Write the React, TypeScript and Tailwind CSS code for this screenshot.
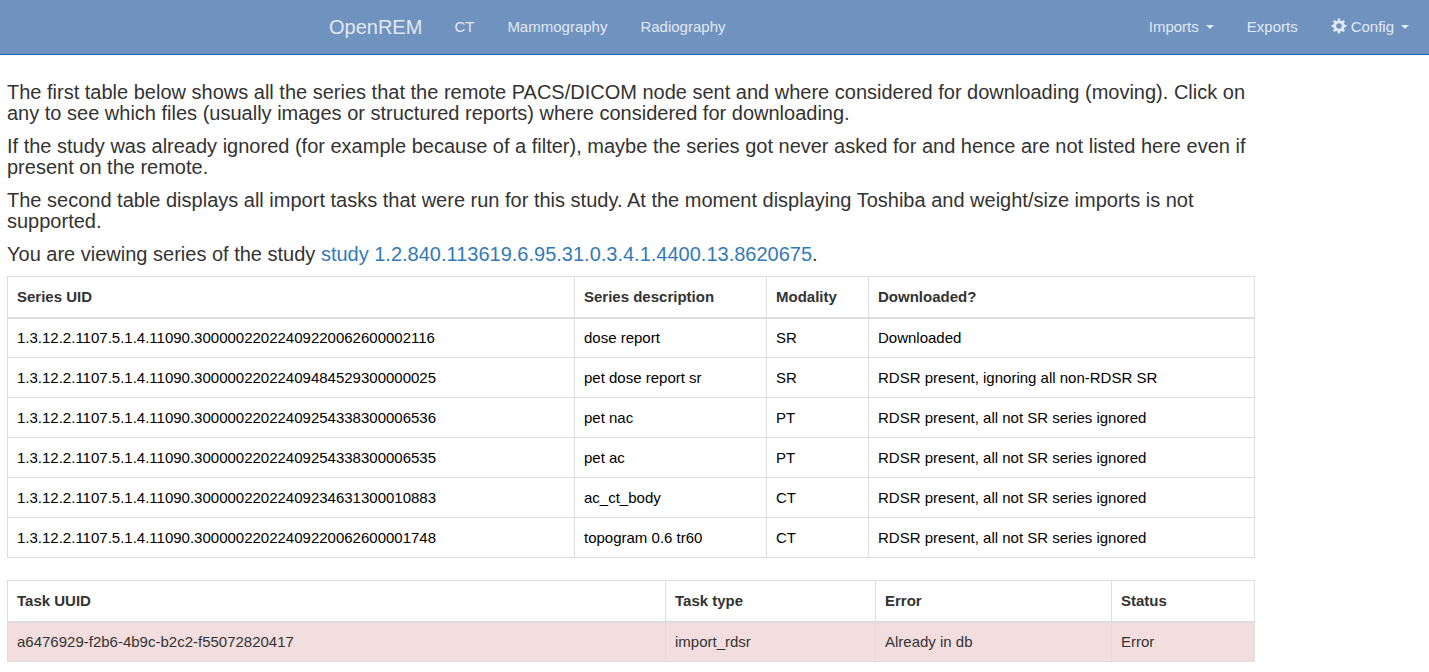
import React from "react";

const series = [
  ["1.3.12.2.1107.5.1.4.11090.30000022022409220062600002116", "dose report", "SR", "Downloaded"],
  ["1.3.12.2.1107.5.1.4.11090.30000022022409484529300000025", "pet dose report sr", "SR", "RDSR present, ignoring all non-RDSR SR"],
  ["1.3.12.2.1107.5.1.4.11090.30000022022409254338300006536", "pet nac", "PT", "RDSR present, all not SR series ignored"],
  ["1.3.12.2.1107.5.1.4.11090.30000022022409254338300006535", "pet ac", "PT", "RDSR present, all not SR series ignored"],
  ["1.3.12.2.1107.5.1.4.11090.30000022022409234631300010883", "ac_ct_body", "CT", "RDSR present, all not SR series ignored"],
  ["1.3.12.2.1107.5.1.4.11090.30000022022409220062600001748", "topogram 0.6 tr60", "CT", "RDSR present, all not SR series ignored"],
];

const tasks = [["a6476929-f2b6-4b9c-b2c2-f55072820417", "import_rdsr", "Already in db", "Error"]];

const teeth = [0, 45, 90, 135, 180, 225, 270, 315];

function Caret() {
  return <span className="ml-[7px] inline-block border-x-4 border-t-4 border-x-transparent border-t-current" />;
}

function Cog() {
  return (
    <svg viewBox="0 0 16 16" className="mr-1 mb-0.5 h-4 w-4" fill="currentColor" aria-hidden="true">
      <circle cx="8" cy="8" r="4.200" fill="none" stroke="currentColor" strokeWidth="2.800" />
      {teeth.map((angle) => (
        <path key={angle} d="M6.600 3.200 6.900 0.500h2.200l.3 2.700z" transform={`rotate(${angle} 8 8)`} />
      ))}
    </svg>
  );
}

export default function App() {
  return (
    <div className="min-h-screen bg-white font-['Liberation_Sans',Arial,sans-serif] text-[15px] leading-5 text-[#333]">
      <header className="border-b border-[#1a63bd] bg-[#7092be] text-[#e0e9f5]">
        <nav className="flex h-[54px] items-center justify-between pr-5 pl-[329px]">
          <div className="flex items-center gap-8">
            <a href="#" className="text-xl">OpenREM</a>
            <div className="flex items-center gap-[33px]">
              <a href="#">CT</a>
              <a href="#">Mammography</a>
              <a href="#">Radiography</a>
            </div>
          </div>
          <div className="flex items-center gap-[33px]">
            <button type="button" className="flex items-center">Imports<Caret /></button>
            <a href="#">Exports</a>
            <button type="button" className="flex items-center"><Cog />Config<Caret /></button>
          </div>
        </nav>
      </header>
      <main className="max-w-[1262px] px-[7px] pt-[27px]">
        <div className="space-y-3 text-xl leading-[21px]">
          <p>The first table below shows all the series that the remote PACS/DICOM node sent and where considered for downloading (moving). Click on any to see which files (usually images or structured reports) where considered for downloading.</p>
          <p>If the study was already ignored (for example because of a filter), maybe the series got never asked for and hence are not listed here even if present on the remote.</p>
          <p>The second table displays all import tasks that were run for this study. At the moment displaying Toshiba and weight/size imports is not supported.</p>
          <p>You are viewing series of the study <a href="#" className="text-[#337ab7]">study 1.2.840.113619.6.95.31.0.3.4.1.4400.13.8620675</a>.</p>
        </div>
        <table className="mt-[11px] w-full table-fixed border-collapse border border-[#ddd] text-left">
          <colgroup><col className="w-[567px]" /><col className="w-[192px]" /><col className="w-[102px]" /><col /></colgroup>
          <thead>
            <tr className="h-[41px] border-b-2 border-[#ddd]">
              {["Series UID", "Series description", "Modality", "Downloaded?"].map((h) => (
                <th key={h} scope="col" className="border-x border-[#ddd] px-[9px]">{h}</th>
              ))}
            </tr>
          </thead>
          <tbody className="text-black">
            {series.map((row) => (
              <tr key={row[0]} className="h-10 border-b border-[#ddd]">
                {row.map((cell, i) => (
                  <td key={i} className="border-x border-[#ddd] px-[9px]">{cell}</td>
                ))}
              </tr>
            ))}
          </tbody>
        </table>
        <table className="mt-[22px] w-full table-fixed border-collapse border border-[#ddd] text-left">
          <colgroup><col className="w-[658px]" /><col className="w-[210px]" /><col className="w-[236px]" /><col /></colgroup>
          <thead>
            <tr className="h-[41px] border-b-2 border-[#ddd]">
              {["Task UUID", "Task type", "Error", "Status"].map((h) => (
                <th key={h} scope="col" className="border-x border-[#ddd] px-[9px]">{h}</th>
              ))}
            </tr>
          </thead>
          <tbody>
            {tasks.map((row) => (
              <tr key={row[0]} className="h-10 border-b border-[#ddd] bg-[#f2dede]">
                {row.map((cell, i) => (
                  <td key={i} className="border-x border-[#ddd] px-[9px]">{cell}</td>
                ))}
              </tr>
            ))}
          </tbody>
        </table>
      </main>
    </div>
  );
}
